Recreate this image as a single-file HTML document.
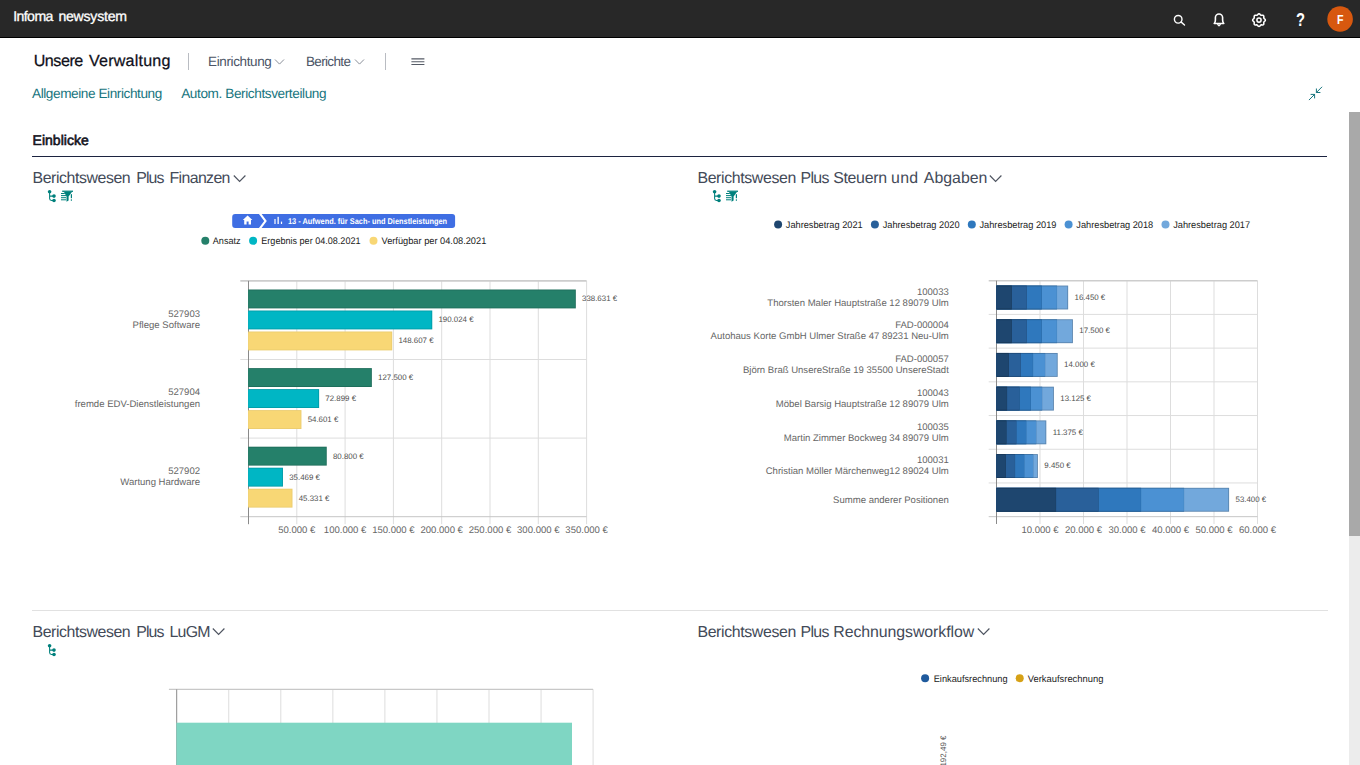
<!DOCTYPE html>
<html lang="de">
<head>
<meta charset="utf-8">
<title>Infoma newsystem - Unsere Verwaltung</title>
<style>
html,body{margin:0;padding:0;overflow:hidden;}
body{width:1360px;height:765px;overflow:hidden;background:#fff;position:relative;font-family:"Liberation Sans", sans-serif;text-rendering:geometricPrecision;}
.t{position:absolute;white-space:nowrap;line-height:1;}
.abs{position:absolute;overflow:visible;}
h1.ttl,h2.ttl{margin:0;padding:0;font-weight:400;font-size:inherit;}
.topbar{position:absolute;left:0;top:0;width:1360px;height:38px;box-sizing:border-box;border-bottom:1px solid #000;background:#282828;}
.vr{position:absolute;top:52.9px;width:1px;height:17px;background:#b9bcc2;}
.hr1{position:absolute;left:32px;top:155.6px;width:1295px;height:1.2px;background:#1c2340;}
.hr2{position:absolute;left:32px;top:609.8px;width:1296px;height:1.6px;background:#e1e1e1;}
.sbtrack{position:absolute;left:1349.2px;top:535.5px;width:10.8px;height:229.5px;background:#ececec;}
.sbthumb{position:absolute;left:1349.2px;top:112px;width:10.8px;height:423.5px;background:#a9a9a9;}
svg text{font-family:"Liberation Sans", sans-serif;text-rendering:geometricPrecision;}
#charts{position:absolute;left:0;top:0;}
</style>
</head>
<body>
<header class="topbar">
<div class="brand">
<span class="t" style="left:13.13px;top:9.26px;font-size:14.10px;color:#ffffff;letter-spacing:-0.561px;-webkit-text-stroke:0.30px #ffffff;">Infoma</span>
<span class="t" style="left:58.38px;top:9.26px;font-size:14.10px;color:#ffffff;letter-spacing:-0.230px;-webkit-text-stroke:0.30px #ffffff;">newsystem</span>
</div>
<svg class="abs" style="left:1160px;top:0" width="200" height="38" viewBox="1160 0 200 38">
<g fill="none" stroke="#fff" stroke-width="1.4" stroke-linecap="round" stroke-linejoin="round">
<circle cx="1178.2" cy="19.3" r="3.8"/><path d="M1181.2 22.1 L1184.5 25"/>
<path d="M1214.2 23.5 h9.6 c-1 -1 -1.2 -1.9 -1.2 -3.5 v-2.4 a3.6 3.6 0 0 0 -7.2 0 v2.4 c0 1.6 -0.2 2.5 -1.2 3.5z" stroke-width="1.6"/>
<path d="M1217.7 24.6 l1.3 1.2 1.3 -1.2" stroke-width="1.3"/>
<circle cx="1259" cy="20.1" r="2.1" stroke-width="1.5"/>
<path d="M1259.00 13.75 L1259.41 13.84 L1259.79 14.08 L1260.13 14.41 L1260.43 14.76 L1260.71 15.06 L1261.01 15.25 L1261.35 15.33 L1261.76 15.32 L1262.22 15.28 L1262.70 15.28 L1263.14 15.38 L1263.49 15.61 L1263.72 15.96 L1263.82 16.40 L1263.82 16.88 L1263.78 17.34 L1263.77 17.75 L1263.85 18.09 L1264.04 18.39 L1264.34 18.67 L1264.69 18.97 L1265.02 19.31 L1265.26 19.69 L1265.35 20.10 L1265.26 20.51 L1265.02 20.89 L1264.69 21.23 L1264.34 21.53 L1264.04 21.81 L1263.85 22.11 L1263.77 22.45 L1263.78 22.86 L1263.82 23.32 L1263.82 23.80 L1263.72 24.24 L1263.49 24.59 L1263.14 24.82 L1262.70 24.92 L1262.22 24.92 L1261.76 24.88 L1261.35 24.87 L1261.01 24.95 L1260.71 25.14 L1260.43 25.44 L1260.13 25.79 L1259.79 26.12 L1259.41 26.36 L1259.00 26.45 L1258.59 26.36 L1258.21 26.12 L1257.87 25.79 L1257.57 25.44 L1257.29 25.14 L1256.99 24.95 L1256.65 24.87 L1256.24 24.88 L1255.78 24.92 L1255.30 24.92 L1254.86 24.82 L1254.51 24.59 L1254.28 24.24 L1254.18 23.80 L1254.18 23.32 L1254.22 22.86 L1254.23 22.45 L1254.15 22.11 L1253.96 21.81 L1253.66 21.53 L1253.31 21.23 L1252.98 20.89 L1252.74 20.51 L1252.65 20.10 L1252.74 19.69 L1252.98 19.31 L1253.31 18.97 L1253.66 18.67 L1253.96 18.39 L1254.15 18.09 L1254.23 17.75 L1254.22 17.34 L1254.18 16.88 L1254.18 16.40 L1254.28 15.96 L1254.51 15.61 L1254.86 15.38 L1255.30 15.28 L1255.78 15.28 L1256.24 15.32 L1256.65 15.33 L1256.99 15.25 L1257.29 15.06 L1257.57 14.76 L1257.87 14.41 L1258.21 14.08 L1258.59 13.84 L1259.00 13.75Z" stroke-width="1.55"/>
</g>
<circle cx="1340.1" cy="19" r="12.8" fill="#d7580f"/>
<text x="1300.4" y="26.4" font-size="18.5" font-weight="700" fill="#fff" text-anchor="middle" textLength="9" lengthAdjust="spacingAndGlyphs">?</text>
<text x="1340.3" y="24.1" font-size="13.2" font-weight="700" fill="#fff" text-anchor="middle" textLength="6.5" lengthAdjust="spacingAndGlyphs">F</text>
</svg>
</header>
<nav>
<h1 class="ttl">
<span class="t" style="left:33.69px;top:53.47px;font-size:16.10px;color:#10101a;letter-spacing:-0.454px;-webkit-text-stroke:0.25px #10101a;">Unsere</span>
<span class="t" style="left:88.92px;top:53.47px;font-size:16.10px;color:#10101a;letter-spacing:0.215px;-webkit-text-stroke:0.25px #10101a;">Verwaltung</span>
</h1>
<div class="vr" style="left:188px"></div><div class="vr" style="left:385px"></div>
<span class="t" style="left:208.02px;top:55.37px;font-size:13.50px;color:#4c5566;letter-spacing:-0.371px;">Einrichtung</span>
<span class="t" style="left:305.92px;top:55.37px;font-size:13.50px;color:#4c5566;letter-spacing:-0.637px;">Berichte</span>
<svg class="abs" style="left:270px;top:50px" width="170" height="24" viewBox="270 50 170 24">
<g fill="none" stroke="#8a8f99" stroke-width="1"><path d="M275 59.5 l4.5 4.6 4.5 -4.6"/><path d="M355 59.5 l4.5 4.6 4.5 -4.6"/></g>
<g stroke="#555b66" stroke-width="1.1"><path d="M411.4 58.9h13M411.4 61.7h13M411.4 64.5h13"/></g></svg>
<span class="t" style="left:32.00px;top:87.49px;font-size:13.60px;color:#17757e;letter-spacing:-0.416px;">Allgemeine Einrichtung</span>
<span class="t" style="left:181.20px;top:87.49px;font-size:13.60px;color:#17757e;letter-spacing:-0.398px;">Autom. Berichtsverteilung</span>
<svg class="abs" style="left:1306px;top:84px" width="20" height="20" viewBox="1306 84 20 20">
<g fill="none" stroke="#17757e" stroke-width="1" stroke-linecap="round" stroke-linejoin="round">
<path d="M1321.8 87.1 L1316.4 92.5 M1316.4 88.9 V92.5 H1320"/><path d="M1309.2 99.8 L1314.6 94.4 M1314.6 98 V94.4 H1311"/></g></svg>
</nav>
<main>
<span class="t" style="left:32.58px;top:133.05px;font-size:14.00px;color:#14141c;letter-spacing:0.010px;-webkit-text-stroke:0.60px #14141c;">Einblicke</span>
<div class="hr1"></div><div class="hr2"></div>
<section>
<h2 class="ttl">
<span class="t" style="left:32.53px;top:170.94px;font-size:15.90px;color:#434a58;letter-spacing:-0.429px;">Berichtswesen</span>
<span class="t" style="left:136.33px;top:170.94px;font-size:15.90px;color:#434a58;letter-spacing:-0.932px;">Plus</span>
<span class="t" style="left:169.53px;top:170.94px;font-size:15.90px;color:#434a58;letter-spacing:-0.632px;">Finanzen</span>
</h2>
<svg class="abs" style="left:232.7px;top:174.1px" width="14" height="10" viewBox="0 0 14 10"><path d="M0.8 1.5 L6.6 7.5 L12.4 1.5" fill="none" stroke="#4e5460" stroke-width="1.15"/></svg>
<svg class="abs" style="left:46.0px;top:188.0px" width="30" height="16" viewBox="46 188 30 16"><g fill="#00807c" stroke="none"><circle cx="49.6" cy="191.7" r="1.8"/><circle cx="54" cy="196.1" r="1.8"/><circle cx="54" cy="200.5" r="1.8"/></g><path d="M49.6 191.7 V198.6 a1.9 1.9 0 0 0 1.9 1.9 H54 M49.6 196.1 H54" fill="none" stroke="#00807c" stroke-width="1.05"/><g fill="#00807c"><rect x="62.2" y="190.6" width="10.8" height="1.3"/><path d="M64 191.9 H71.9 L68.6 196.5 V200.5 L66.5 201.7 V196.5 Z"/><rect x="61" y="193" width="3.8" height="1"/><rect x="61" y="195.1" width="5" height="1"/><rect x="61" y="197.2" width="5" height="1"/><rect x="61" y="199.3" width="5" height="1"/><rect x="70.8" y="194.2" width="1.2" height="4"/><rect x="70.8" y="199.4" width="1.2" height="1.3"/></g></svg>
</section>
<section>
<h2 class="ttl">
<span class="t" style="left:697.43px;top:170.94px;font-size:15.90px;color:#434a58;letter-spacing:-0.370px;">Berichtswesen</span>
<span class="t" style="left:800.48px;top:170.94px;font-size:15.90px;color:#434a58;letter-spacing:-0.666px;">Plus</span>
<span class="t" style="left:833.18px;top:170.94px;font-size:15.90px;color:#434a58;letter-spacing:-0.300px;">Steuern</span>
<span class="t" style="left:891.02px;top:170.94px;font-size:15.90px;color:#434a58;letter-spacing:0.282px;">und</span>
<span class="t" style="left:923.85px;top:170.94px;font-size:15.90px;color:#434a58;letter-spacing:-0.016px;">Abgaben</span>
</h2>
<svg class="abs" style="left:988.6px;top:174.1px" width="14" height="10" viewBox="0 0 14 10"><path d="M0.8 1.5 L6.6 7.5 L12.4 1.5" fill="none" stroke="#4e5460" stroke-width="1.15"/></svg>
<svg class="abs" style="left:711.1px;top:188.0px" width="30" height="16" viewBox="46 188 30 16"><g fill="#00807c" stroke="none"><circle cx="49.6" cy="191.7" r="1.8"/><circle cx="54" cy="196.1" r="1.8"/><circle cx="54" cy="200.5" r="1.8"/></g><path d="M49.6 191.7 V198.6 a1.9 1.9 0 0 0 1.9 1.9 H54 M49.6 196.1 H54" fill="none" stroke="#00807c" stroke-width="1.05"/><g fill="#00807c"><rect x="62.2" y="190.6" width="10.8" height="1.3"/><path d="M64 191.9 H71.9 L68.6 196.5 V200.5 L66.5 201.7 V196.5 Z"/><rect x="61" y="193" width="3.8" height="1"/><rect x="61" y="195.1" width="5" height="1"/><rect x="61" y="197.2" width="5" height="1"/><rect x="61" y="199.3" width="5" height="1"/><rect x="70.8" y="194.2" width="1.2" height="4"/><rect x="70.8" y="199.4" width="1.2" height="1.3"/></g></svg>
</section>
<section>
<h2 class="ttl">
<span class="t" style="left:32.53px;top:625.44px;font-size:15.90px;color:#434a58;letter-spacing:-0.429px;">Berichtswesen</span>
<span class="t" style="left:136.33px;top:625.44px;font-size:15.90px;color:#434a58;letter-spacing:-0.932px;">Plus</span>
<span class="t" style="left:169.43px;top:625.44px;font-size:15.90px;color:#434a58;letter-spacing:-0.735px;">LuGM</span>
</h2>
<svg class="abs" style="left:212.4px;top:627.3px" width="14" height="10" viewBox="0 0 14 10"><path d="M0.8 1.5 L6.6 7.5 L12.4 1.5" fill="none" stroke="#4e5460" stroke-width="1.15"/></svg>
<svg class="abs" style="left:46.0px;top:642.2px" width="30" height="16" viewBox="46 188 30 16"><g fill="#00807c" stroke="none"><circle cx="49.6" cy="191.7" r="1.8"/><circle cx="54" cy="196.1" r="1.8"/><circle cx="54" cy="200.5" r="1.8"/></g><path d="M49.6 191.7 V198.6 a1.9 1.9 0 0 0 1.9 1.9 H54 M49.6 196.1 H54" fill="none" stroke="#00807c" stroke-width="1.05"/></svg>
</section>
<section>
<h2 class="ttl">
<span class="t" style="left:697.43px;top:625.44px;font-size:15.90px;color:#434a58;letter-spacing:-0.370px;">Berichtswesen</span>
<span class="t" style="left:800.48px;top:625.44px;font-size:15.90px;color:#434a58;letter-spacing:-0.666px;">Plus</span>
<span class="t" style="left:833.28px;top:625.44px;font-size:15.90px;color:#434a58;letter-spacing:-0.080px;">Rechnungsworkflow</span>
</h2>
<svg class="abs" style="left:977.4px;top:627.3px" width="14" height="10" viewBox="0 0 14 10"><path d="M0.8 1.5 L6.6 7.5 L12.4 1.5" fill="none" stroke="#4e5460" stroke-width="1.15"/></svg>
</section>
<svg id="charts" width="1360" height="765" viewBox="0 0 1360 765">
<rect x="232.2" y="214.1" width="222.9" height="13.8" rx="3" fill="#3f6ee3"/>
<path d="M258.6 213.6 L264.2 221 L258.6 228.4 H261.2 L266.8 221 L261.2 213.6 Z" fill="#fff"/>
<path d="M247.6 215.4 L242.8 219.9 H244.2 V224.6 H246.6 V221.6 H248.6 V224.6 H251 V219.9 H252.4 Z" fill="#fff"/>
<g fill="#fff"><rect x="274.4" y="219" width="1.2" height="5"/><rect x="277.5" y="216.8" width="1.3" height="7.2"/><rect x="280.9" y="221.6" width="1.2" height="2.4"/></g>
<text x="288.00" y="223.90" font-size="8.30" fill="#ffffff" textLength="159.10" lengthAdjust="spacingAndGlyphs" font-weight="700">13 - Aufwend. für Sach- und Dienstleistungen</text>
<circle cx="205.3" cy="240.8" r="4" fill="#25806a"/>
<text x="212.80" y="244.30" font-size="9.60" fill="#1c1c1c" textLength="27.80" lengthAdjust="spacingAndGlyphs">Ansatz</text>
<circle cx="253.1" cy="240.8" r="4" fill="#00b6c4"/>
<text x="261.30" y="244.30" font-size="9.60" fill="#1c1c1c" textLength="99.20" lengthAdjust="spacingAndGlyphs">Ergebnis per 04.08.2021</text>
<circle cx="373.5" cy="240.8" r="4" fill="#f8d775"/>
<text x="381.50" y="244.30" font-size="9.60" fill="#1c1c1c" textLength="104.80" lengthAdjust="spacingAndGlyphs">Verfügbar per 04.08.2021</text>
<path d="M296.80 280.90 V524.20" stroke="#dddddd" stroke-width="1"/>
<path d="M345.10 280.90 V524.20" stroke="#dddddd" stroke-width="1"/>
<path d="M393.40 280.90 V524.20" stroke="#dddddd" stroke-width="1"/>
<path d="M441.70 280.90 V524.20" stroke="#dddddd" stroke-width="1"/>
<path d="M490.00 280.90 V524.20" stroke="#dddddd" stroke-width="1"/>
<path d="M538.30 280.90 V524.20" stroke="#dddddd" stroke-width="1"/>
<path d="M586.60 280.90 V524.20" stroke="#dddddd" stroke-width="1"/>
<path d="M240.3 280.90 H586.60" stroke="#cdcdcd" stroke-width="1.6"/>
<path d="M240.3 359.50 H586.60" stroke="#dddddd" stroke-width="1"/>
<path d="M240.3 438.10 H586.60" stroke="#dddddd" stroke-width="1"/>
<path d="M240.3 516.70 H586.60" stroke="#c6c6c6" stroke-width="1"/>
<path d="M248.50 280.90 V524.20" stroke="#8a8a8a" stroke-width="1"/>
<rect x="248.20" y="289.50" width="327.62" height="18.90" fill="#1f6e5b"/>
<rect x="248.20" y="290.40" width="326.72" height="17.10" fill="#25806a"/>
<text x="582.02" y="301.35" font-size="7.90" fill="#505050">338.631 €</text>
<rect x="248.20" y="310.50" width="184.06" height="18.90" fill="#009ca8"/>
<rect x="248.20" y="311.40" width="183.16" height="17.10" fill="#00b6c4"/>
<text x="438.46" y="322.35" font-size="7.90" fill="#505050">190.024 €</text>
<rect x="248.20" y="331.50" width="144.05" height="18.90" fill="#ebcc6f"/>
<rect x="248.20" y="332.40" width="143.15" height="17.10" fill="#f8d775"/>
<text x="398.45" y="343.35" font-size="7.90" fill="#505050">148.607 €</text>
<text x="200.00" y="316.60" font-size="9.55" fill="#666666" text-anchor="end">527903</text>
<text x="200.00" y="328.10" font-size="9.55" fill="#666666" text-anchor="end">Pflege Software</text>
<rect x="248.20" y="368.10" width="123.66" height="18.90" fill="#1f6e5b"/>
<rect x="248.20" y="369.00" width="122.76" height="17.10" fill="#25806a"/>
<text x="378.06" y="379.95" font-size="7.90" fill="#505050">127.500 €</text>
<rect x="248.20" y="389.10" width="70.92" height="18.90" fill="#009ca8"/>
<rect x="248.20" y="390.00" width="70.02" height="17.10" fill="#00b6c4"/>
<text x="325.32" y="400.95" font-size="7.90" fill="#505050">72.899 €</text>
<rect x="248.20" y="410.10" width="53.24" height="18.90" fill="#ebcc6f"/>
<rect x="248.20" y="411.00" width="52.34" height="17.10" fill="#f8d775"/>
<text x="307.64" y="421.95" font-size="7.90" fill="#505050">54.601 €</text>
<text x="200.00" y="395.20" font-size="9.55" fill="#666666" text-anchor="end">527904</text>
<text x="200.00" y="406.70" font-size="9.55" fill="#666666" text-anchor="end">fremde EDV-Dienstleistungen</text>
<rect x="248.20" y="446.70" width="78.55" height="18.90" fill="#1f6e5b"/>
<rect x="248.20" y="447.60" width="77.65" height="17.10" fill="#25806a"/>
<text x="332.95" y="458.55" font-size="7.90" fill="#505050">80.800 €</text>
<rect x="248.20" y="467.70" width="34.76" height="18.90" fill="#009ca8"/>
<rect x="248.20" y="468.60" width="33.86" height="17.10" fill="#00b6c4"/>
<text x="289.16" y="479.55" font-size="7.90" fill="#505050">35.469 €</text>
<rect x="248.20" y="488.70" width="44.29" height="18.90" fill="#ebcc6f"/>
<rect x="248.20" y="489.60" width="43.39" height="17.10" fill="#f8d775"/>
<text x="298.69" y="500.55" font-size="7.90" fill="#505050">45.331 €</text>
<text x="200.00" y="473.80" font-size="9.55" fill="#666666" text-anchor="end">527902</text>
<text x="200.00" y="485.30" font-size="9.55" fill="#666666" text-anchor="end">Wartung Hardware</text>
<text x="296.80" y="533.20" font-size="9.55" fill="#666666" text-anchor="middle">50.000 €</text>
<text x="345.10" y="533.20" font-size="9.55" fill="#666666" text-anchor="middle">100.000 €</text>
<text x="393.40" y="533.20" font-size="9.55" fill="#666666" text-anchor="middle">150.000 €</text>
<text x="441.70" y="533.20" font-size="9.55" fill="#666666" text-anchor="middle">200.000 €</text>
<text x="490.00" y="533.20" font-size="9.55" fill="#666666" text-anchor="middle">250.000 €</text>
<text x="538.30" y="533.20" font-size="9.55" fill="#666666" text-anchor="middle">300.000 €</text>
<text x="586.60" y="533.20" font-size="9.55" fill="#666666" text-anchor="middle">350.000 €</text>
<circle cx="778.1" cy="224.6" r="4" fill="#1e466f"/>
<text x="785.80" y="228.10" font-size="9.60" fill="#1c1c1c" textLength="76.90" lengthAdjust="spacingAndGlyphs">Jahresbetrag 2021</text>
<circle cx="874.9" cy="224.6" r="4" fill="#29609a"/>
<text x="882.65" y="228.10" font-size="9.60" fill="#1c1c1c" textLength="76.90" lengthAdjust="spacingAndGlyphs">Jahresbetrag 2020</text>
<circle cx="971.8" cy="224.6" r="4" fill="#2f78bd"/>
<text x="979.50" y="228.10" font-size="9.60" fill="#1c1c1c" textLength="76.90" lengthAdjust="spacingAndGlyphs">Jahresbetrag 2019</text>
<circle cx="1068.6" cy="224.6" r="4" fill="#4b91d3"/>
<text x="1076.35" y="228.10" font-size="9.60" fill="#1c1c1c" textLength="76.90" lengthAdjust="spacingAndGlyphs">Jahresbetrag 2018</text>
<circle cx="1165.5" cy="224.6" r="4" fill="#72a8dc"/>
<text x="1173.20" y="228.10" font-size="9.60" fill="#1c1c1c" textLength="76.90" lengthAdjust="spacingAndGlyphs">Jahresbetrag 2017</text>
<path d="M1040.00 280.70 V523.97" stroke="#dddddd" stroke-width="1"/>
<path d="M1083.50 280.70 V523.97" stroke="#dddddd" stroke-width="1"/>
<path d="M1127.00 280.70 V523.97" stroke="#dddddd" stroke-width="1"/>
<path d="M1170.50 280.70 V523.97" stroke="#dddddd" stroke-width="1"/>
<path d="M1214.00 280.70 V523.97" stroke="#dddddd" stroke-width="1"/>
<path d="M1257.50 280.70 V523.97" stroke="#dddddd" stroke-width="1"/>
<path d="M988.7 280.70 H1257.50" stroke="#cdcdcd" stroke-width="1.6"/>
<path d="M988.7 314.41 H1257.50" stroke="#dddddd" stroke-width="1"/>
<path d="M988.7 348.12 H1257.50" stroke="#dddddd" stroke-width="1"/>
<path d="M988.7 381.83 H1257.50" stroke="#dddddd" stroke-width="1"/>
<path d="M988.7 415.54 H1257.50" stroke="#dddddd" stroke-width="1"/>
<path d="M988.7 449.25 H1257.50" stroke="#dddddd" stroke-width="1"/>
<path d="M988.7 482.96 H1257.50" stroke="#dddddd" stroke-width="1"/>
<path d="M988.7 516.67 H1257.50" stroke="#c6c6c6" stroke-width="1"/>
<path d="M996.50 280.70 V523.97" stroke="#8a8a8a" stroke-width="1"/>
<rect x="996.40" y="285.55" width="71.75" height="23.90" fill="#5b86b0"/>
<rect x="996.40" y="286.45" width="70.85" height="22.10" fill="#72a8dc"/>
<rect x="996.40" y="285.55" width="60.65" height="23.90" fill="#3c74a8"/>
<rect x="996.40" y="286.45" width="60.40" height="22.10" fill="#4b91d3"/>
<rect x="996.40" y="285.55" width="45.40" height="23.90" fill="#256097"/>
<rect x="996.40" y="286.45" width="45.15" height="22.10" fill="#2f78bd"/>
<rect x="996.40" y="285.55" width="30.40" height="23.90" fill="#204c7b"/>
<rect x="996.40" y="286.45" width="30.15" height="22.10" fill="#29609a"/>
<rect x="996.40" y="285.55" width="15.40" height="23.90" fill="#183858"/>
<rect x="996.40" y="286.45" width="15.15" height="22.10" fill="#1e466f"/>
<text x="1074.55" y="299.75" font-size="7.90" fill="#505050">16.450 €</text>
<text x="948.80" y="294.70" font-size="9.55" fill="#666666" text-anchor="end">100033</text>
<text x="948.80" y="305.70" font-size="9.55" fill="#666666" text-anchor="end">Thorsten Maler Hauptstraße 12 89079 Ulm</text>
<rect x="996.40" y="319.26" width="76.50" height="23.90" fill="#5b86b0"/>
<rect x="996.40" y="320.16" width="75.60" height="22.10" fill="#72a8dc"/>
<rect x="996.40" y="319.26" width="60.65" height="23.90" fill="#3c74a8"/>
<rect x="996.40" y="320.16" width="60.40" height="22.10" fill="#4b91d3"/>
<rect x="996.40" y="319.26" width="45.40" height="23.90" fill="#256097"/>
<rect x="996.40" y="320.16" width="45.15" height="22.10" fill="#2f78bd"/>
<rect x="996.40" y="319.26" width="30.40" height="23.90" fill="#204c7b"/>
<rect x="996.40" y="320.16" width="30.15" height="22.10" fill="#29609a"/>
<rect x="996.40" y="319.26" width="15.40" height="23.90" fill="#183858"/>
<rect x="996.40" y="320.16" width="15.15" height="22.10" fill="#1e466f"/>
<text x="1079.30" y="333.46" font-size="7.90" fill="#505050">17.500 €</text>
<text x="948.80" y="328.41" font-size="9.55" fill="#666666" text-anchor="end">FAD-000004</text>
<text x="948.80" y="339.41" font-size="9.55" fill="#666666" text-anchor="end">Autohaus Korte GmbH Ulmer Straße 47 89231 Neu-Ulm</text>
<rect x="996.40" y="352.97" width="61.30" height="23.90" fill="#5b86b0"/>
<rect x="996.40" y="353.87" width="60.40" height="22.10" fill="#72a8dc"/>
<rect x="996.40" y="352.97" width="48.80" height="23.90" fill="#3c74a8"/>
<rect x="996.40" y="353.87" width="48.55" height="22.10" fill="#4b91d3"/>
<rect x="996.40" y="352.97" width="36.70" height="23.90" fill="#256097"/>
<rect x="996.40" y="353.87" width="36.45" height="22.10" fill="#2f78bd"/>
<rect x="996.40" y="352.97" width="24.60" height="23.90" fill="#204c7b"/>
<rect x="996.40" y="353.87" width="24.35" height="22.10" fill="#29609a"/>
<rect x="996.40" y="352.97" width="12.40" height="23.90" fill="#183858"/>
<rect x="996.40" y="353.87" width="12.15" height="22.10" fill="#1e466f"/>
<text x="1064.10" y="367.17" font-size="7.90" fill="#505050">14.000 €</text>
<text x="948.80" y="362.12" font-size="9.55" fill="#666666" text-anchor="end">FAD-000057</text>
<text x="948.80" y="373.12" font-size="9.55" fill="#666666" text-anchor="end">Björn Braß UnsereStraße 19 35500 UnsereStadt</text>
<rect x="996.40" y="386.68" width="57.50" height="23.90" fill="#5b86b0"/>
<rect x="996.40" y="387.58" width="56.60" height="22.10" fill="#72a8dc"/>
<rect x="996.40" y="386.68" width="45.80" height="23.90" fill="#3c74a8"/>
<rect x="996.40" y="387.58" width="45.55" height="22.10" fill="#4b91d3"/>
<rect x="996.40" y="386.68" width="34.50" height="23.90" fill="#256097"/>
<rect x="996.40" y="387.58" width="34.25" height="22.10" fill="#2f78bd"/>
<rect x="996.40" y="386.68" width="23.20" height="23.90" fill="#204c7b"/>
<rect x="996.40" y="387.58" width="22.95" height="22.10" fill="#29609a"/>
<rect x="996.40" y="386.68" width="10.70" height="23.90" fill="#183858"/>
<rect x="996.40" y="387.58" width="10.45" height="22.10" fill="#1e466f"/>
<text x="1060.30" y="400.88" font-size="7.90" fill="#505050">13.125 €</text>
<text x="948.80" y="395.83" font-size="9.55" fill="#666666" text-anchor="end">100043</text>
<text x="948.80" y="406.83" font-size="9.55" fill="#666666" text-anchor="end">Möbel Barsig Hauptstraße 12 89079 Ulm</text>
<rect x="996.40" y="420.39" width="49.90" height="23.90" fill="#5b86b0"/>
<rect x="996.40" y="421.29" width="49.00" height="22.10" fill="#72a8dc"/>
<rect x="996.40" y="420.39" width="39.90" height="23.90" fill="#3c74a8"/>
<rect x="996.40" y="421.29" width="39.65" height="22.10" fill="#4b91d3"/>
<rect x="996.40" y="420.39" width="29.90" height="23.90" fill="#256097"/>
<rect x="996.40" y="421.29" width="29.65" height="22.10" fill="#2f78bd"/>
<rect x="996.40" y="420.39" width="20.00" height="23.90" fill="#204c7b"/>
<rect x="996.40" y="421.29" width="19.75" height="22.10" fill="#29609a"/>
<rect x="996.40" y="420.39" width="10.10" height="23.90" fill="#183858"/>
<rect x="996.40" y="421.29" width="9.85" height="22.10" fill="#1e466f"/>
<text x="1052.70" y="434.59" font-size="7.90" fill="#505050">11.375 €</text>
<text x="948.80" y="429.54" font-size="9.55" fill="#666666" text-anchor="end">100035</text>
<text x="948.80" y="440.54" font-size="9.55" fill="#666666" text-anchor="end">Martin Zimmer Bockweg 34 89079 Ulm</text>
<rect x="996.40" y="454.10" width="41.50" height="23.90" fill="#5b86b0"/>
<rect x="996.40" y="455.00" width="40.60" height="22.10" fill="#72a8dc"/>
<rect x="996.40" y="454.10" width="36.90" height="23.90" fill="#3c74a8"/>
<rect x="996.40" y="455.00" width="36.65" height="22.10" fill="#4b91d3"/>
<rect x="996.40" y="454.10" width="27.90" height="23.90" fill="#256097"/>
<rect x="996.40" y="455.00" width="27.65" height="22.10" fill="#2f78bd"/>
<rect x="996.40" y="454.10" width="18.70" height="23.90" fill="#204c7b"/>
<rect x="996.40" y="455.00" width="18.45" height="22.10" fill="#29609a"/>
<rect x="996.40" y="454.10" width="9.40" height="23.90" fill="#183858"/>
<rect x="996.40" y="455.00" width="9.15" height="22.10" fill="#1e466f"/>
<text x="1044.30" y="468.30" font-size="7.90" fill="#505050">9.450 €</text>
<text x="948.80" y="463.25" font-size="9.55" fill="#666666" text-anchor="end">100031</text>
<text x="948.80" y="474.25" font-size="9.55" fill="#666666" text-anchor="end">Christian Möller Märchenweg12 89024 Ulm</text>
<rect x="996.40" y="487.81" width="232.70" height="23.90" fill="#5b86b0"/>
<rect x="996.40" y="488.71" width="231.80" height="22.10" fill="#72a8dc"/>
<rect x="996.40" y="487.81" width="187.70" height="23.90" fill="#3c74a8"/>
<rect x="996.40" y="488.71" width="187.45" height="22.10" fill="#4b91d3"/>
<rect x="996.40" y="487.81" width="144.70" height="23.90" fill="#256097"/>
<rect x="996.40" y="488.71" width="144.45" height="22.10" fill="#2f78bd"/>
<rect x="996.40" y="487.81" width="102.20" height="23.90" fill="#204c7b"/>
<rect x="996.40" y="488.71" width="101.95" height="22.10" fill="#29609a"/>
<rect x="996.40" y="487.81" width="59.70" height="23.90" fill="#183858"/>
<rect x="996.40" y="488.71" width="59.45" height="22.10" fill="#1e466f"/>
<text x="1235.50" y="502.01" font-size="7.90" fill="#505050">53.400 €</text>
<text x="948.80" y="502.96" font-size="9.55" fill="#666666" text-anchor="end">Summe anderer Positionen</text>
<text x="1040.00" y="533.20" font-size="9.55" fill="#666666" text-anchor="middle">10.000 €</text>
<text x="1083.50" y="533.20" font-size="9.55" fill="#666666" text-anchor="middle">20.000 €</text>
<text x="1127.00" y="533.20" font-size="9.55" fill="#666666" text-anchor="middle">30.000 €</text>
<text x="1170.50" y="533.20" font-size="9.55" fill="#666666" text-anchor="middle">40.000 €</text>
<text x="1214.00" y="533.20" font-size="9.55" fill="#666666" text-anchor="middle">50.000 €</text>
<text x="1257.50" y="533.20" font-size="9.55" fill="#666666" text-anchor="middle">60.000 €</text>
<path d="M228.75 689.40 V766" stroke="#dddddd" stroke-width="1"/>
<path d="M280.80 689.40 V766" stroke="#dddddd" stroke-width="1"/>
<path d="M332.85 689.40 V766" stroke="#dddddd" stroke-width="1"/>
<path d="M384.90 689.40 V766" stroke="#dddddd" stroke-width="1"/>
<path d="M436.95 689.40 V766" stroke="#dddddd" stroke-width="1"/>
<path d="M489.00 689.40 V766" stroke="#dddddd" stroke-width="1"/>
<path d="M541.05 689.40 V766" stroke="#dddddd" stroke-width="1"/>
<path d="M593.10 689.40 V766" stroke="#dddddd" stroke-width="1"/>
<path d="M168.9 689.40 H593.10" stroke="#c8c8c8" stroke-width="1.3"/>
<path d="M176.70 689.40 V766" stroke="#8a8a8a" stroke-width="1"/>
<rect x="176.40" y="722.7" width="395.60" height="50" fill="#7fd6c3"/>
<circle cx="925.1" cy="678.2" r="4" fill="#1f5a9d"/>
<text x="933.70" y="681.70" font-size="9.60" fill="#1c1c1c" textLength="73.90" lengthAdjust="spacingAndGlyphs">Einkaufsrechnung</text>
<circle cx="1019.7" cy="678.2" r="4" fill="#d6a116"/>
<text x="1027.80" y="681.70" font-size="9.60" fill="#1c1c1c" textLength="75.60" lengthAdjust="spacingAndGlyphs">Verkaufsrechnung</text>
<text transform="translate(946.3 766.6) rotate(-90)" font-size="8" fill="#505050">192,49 €</text>
</svg>
</main>
<div class="sbtrack"></div><div class="sbthumb"></div>
</body>
</html>
